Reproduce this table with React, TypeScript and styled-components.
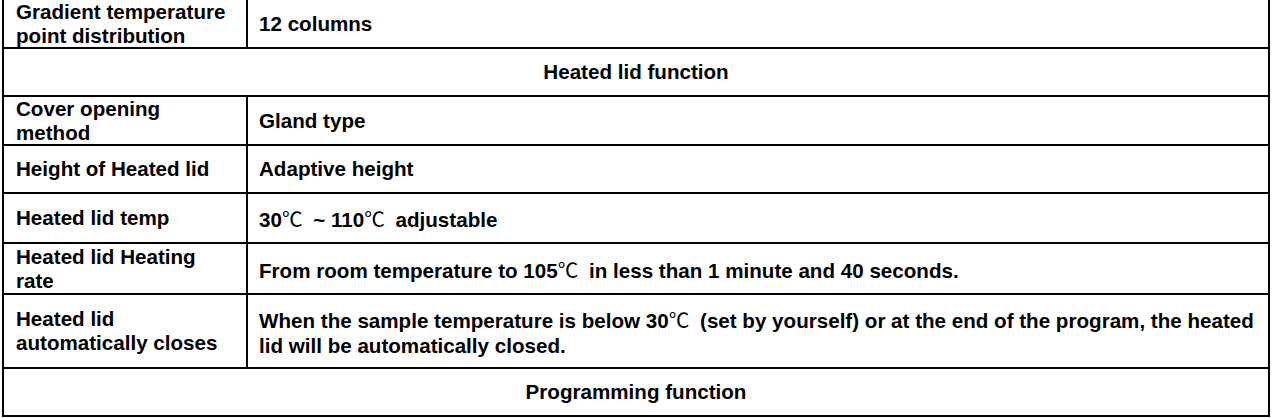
import React from "react";
import styled, { createGlobalStyle } from "styled-components";

const Global = createGlobalStyle`
  html, body { margin: 0; padding: 0; background: #ffffff; }
  body { font-family: "Liberation Sans", Arial, sans-serif; color: #000; }
  * { box-sizing: border-box; }
`;

const Table = styled.div`
  width: 1268px;
  margin-left: 2px;
  border-left: 2px solid #000;
  border-right: 2px solid #000;
  display: flex;
  flex-direction: column;
  font-family: "Liberation Sans", Arial, sans-serif;
  font-weight: 700;
  font-size: 20.6px;
  line-height: normal;
  color: #000;
`;

const Row = styled.div<{ $h: number }>`
  display: grid;
  grid-template-columns: 244px 1fr;
  height: ${(p) => p.$h}px;
  border-bottom: 2px solid #000;
`;

const HeadRow = styled.div<{ $h: number }>`
  display: flex;
  align-items: center;
  justify-content: center;
  height: ${(p) => p.$h}px;
  border-bottom: 2px solid #000;
`;

const LabelCell = styled.div`
  display: flex;
  align-items: center;
  padding: 0 12px 0 12px;
  border-right: 2px solid #000;
`;

const ValueCell = styled.div`
  display: flex;
  align-items: center;
  padding: 0 8px 0 11px;
`;

const Deg = styled.span`
  font-family: "Noto Sans CJK SC", "DejaVu Sans", sans-serif;
  font-weight: 400;
  margin-right: 5px;
`;

const C = () => <Deg>℃</Deg>;

type Item =
  | { kind: "row"; h: number; label: React.ReactNode; value: React.ReactNode }
  | { kind: "head"; h: number; title: string };

const items: Item[] = [
  { kind: "row", h: 49, label: "Gradient temperature point distribution", value: "12 columns" },
  { kind: "head", h: 48, title: "Heated lid function" },
  { kind: "row", h: 49, label: "Cover opening method", value: "Gland type" },
  { kind: "row", h: 48, label: "Height of Heated lid", value: "Adaptive height" },
  {
    kind: "row",
    h: 50,
    label: "Heated lid temp",
    value: (
      <span>
        30<C /> ~ 110<C /> adjustable
      </span>
    ),
  },
  {
    kind: "row",
    h: 51,
    label: "Heated lid Heating rate",
    value: (
      <span>
        From room temperature to 105<C /> in less than 1 minute and 40 seconds.
      </span>
    ),
  },
  {
    kind: "row",
    h: 74,
    label: "Heated lid automatically closes",
    value: (
      <span>
        When the sample temperature is below 30<C /> (set by yourself) or at the end of the program, the heated lid will
        be automatically closed.
      </span>
    ),
  },
  { kind: "head", h: 48, title: "Programming function" },
];

export default function App() {
  return (
    <>
      <Global />
      <Table>
        {items.map((it, i) =>
          it.kind === "head" ? (
            <HeadRow key={i} $h={it.h}>
              {it.title}
            </HeadRow>
          ) : (
            <Row key={i} $h={it.h}>
              <LabelCell>
                <span>{it.label}</span>
              </LabelCell>
              <ValueCell>{it.value}</ValueCell>
            </Row>
          )
        )}
      </Table>
    </>
  );
}
